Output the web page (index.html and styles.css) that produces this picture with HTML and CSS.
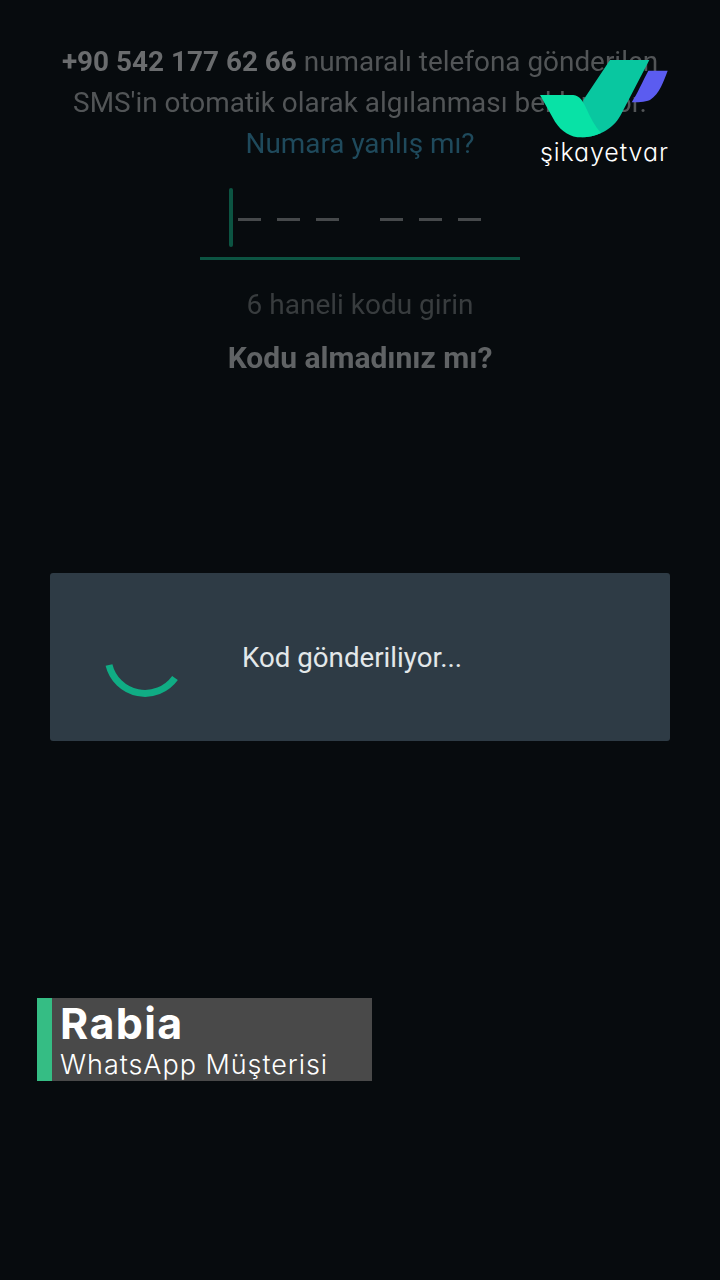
FILE: index.html
```html
<!DOCTYPE html>
<html lang="tr">
	<head>
		<meta charset="utf-8">
		<title>Kod gönderiliyor</title>
		<link rel="stylesheet" href="styles.css">
	</head>
	<body>
		<section class="verify">
			<p class="verify-line"><b>+90 542 177 62 66</b> numaralı telefona gönderilen</p>
			<p class="verify-line">SMS'in otomatik olarak algılanması bekleniyor.</p>
			<p class="verify-line verify-link">Numara yanlış mı?</p>

			<div class="code">
				<span class="code-cursor"></span>
				<span class="code-group"><i></i><i></i><i></i></span>
				<span class="code-group"><i></i><i></i><i></i></span>
			</div>

			<p class="code-hint">6 haneli kodu girin</p>
			<p class="code-resend">Kodu almadınız mı?</p>
		</section>

		<section class="dialog">
			<svg class="spinner" width="80" height="60" viewBox="0 0 80 60">
				<path d="M7 16 A37 37 0 0 0 73 29" fill="none" stroke="#10ac84" stroke-width="7"/>
			</svg>
			<span class="dialog-text">Kod gönderiliyor...</span>
		</section>

		<section class="caption">
			<div class="caption-name">Rabia</div>
			<div class="caption-role">WhatsApp Müşterisi</div>
		</section>

		<div class="logo">
			<svg width="160" height="90" viewBox="0 0 480 270">
				<path d="M385 62 L443 62 C430 95 420 130 390 150 C375 157 350 157 335 157 C350 135 370 90 385 62 Z" fill="#5b5cf0"/>
				<path d="M270 30 L388 30 L305 190 C285 232 240 262 185 262 L190 150 Z" fill="#09c7a0"/>
				<path d="M60 135 L160 135 C180 137 190 155 200 178 C212 205 225 230 243 249 C225 257 205 262 185 262 C150 262 125 245 105 215 Z" fill="#08e2a6"/>
			</svg>
			<span class="logo-text">şikayetvar</span>
		</div>
	</body>
</html>
```
FILE: styles.css
```css
html, body { margin: 0; padding: 0; }
body { width: 720px; height: 1280px; background: #070b0e; font-family: Roboto, "Liberation Sans", sans-serif; position: relative; overflow: hidden; }
p { margin: 0; }

.verify { padding-top: 41px; display: flex; flex-direction: column; align-items: center; color: #525557; filter: blur(0.5px); }
.verify-line { font-size: 27.9px; line-height: 41px; white-space: nowrap; }
.verify-line b { color: #6a6c6e; font-weight: 700; }
.verify-link { color: #1f4a5c; }

.code { margin-top: 22px; width: 320px; height: 71px; border-bottom: 3px solid #0c5442; display: flex; align-items: flex-start; }
.code-cursor { width: 4px; height: 59px; margin: 2px 0 0 29px; background: #0c5442; border-radius: 2px; }
.code-group { display: flex; gap: 16px; margin: 32px 0 0 5px; }
.code-group + .code-group { margin-left: 41px; }
.code-group i { display: block; width: 23px; height: 3px; background: #46494b; }

.code-hint { margin-top: 28px; font-size: 28px; line-height: 34px; color: #383c3e; }
.code-resend { margin-top: 19px; font-size: 30px; line-height: 34px; font-weight: 700; color: #606365; }

.dialog { margin: 198px 0 0 50px; width: 620px; height: 168px; background: #2e3b45; border-radius: 3px; display: flex; align-items: center; }
.spinner { margin: 44px 0 0 52px; flex: none; }
.dialog-text { margin-left: 60px; font-size: 27.7px; color: #e3e8ea; }

.caption { margin: 257px 0 0 37px; width: 335px; height: 83px; box-sizing: border-box; background: #494949; border-left: 15px solid #35bd84; padding-left: 8px; color: #fff; }
.caption-name { font-family: Inter, sans-serif; font-size: 43px; line-height: 50px; font-weight: 700; letter-spacing: 1.4px; }
.caption-role { font-family: Inter, sans-serif; font-size: 27px; line-height: 33px; font-weight: 300; letter-spacing: 0.95px; }

.logo { position: absolute; left: 520px; top: 50px; width: 160px; }
.logo svg { display: block; }
.logo-text { position: absolute; left: 20px; top: 86px; font-family: Inter, sans-serif; font-size: 25px; line-height: 32px; font-weight: 300; letter-spacing: 0.9px; font-feature-settings: "cv11"; color: #fff; white-space: nowrap; }
```
